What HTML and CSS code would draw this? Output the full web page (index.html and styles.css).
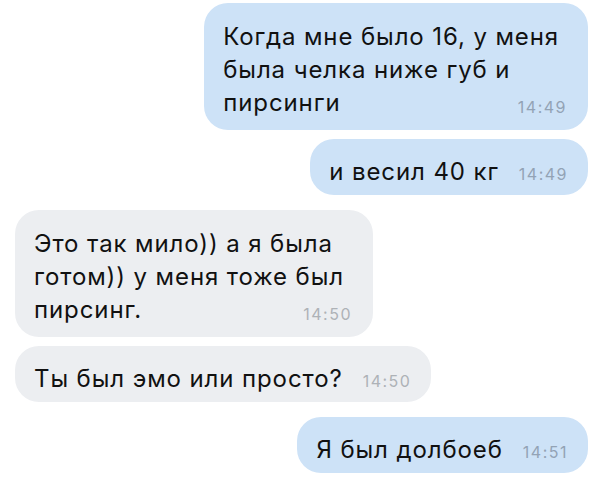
FILE: index.html
```html
<!DOCTYPE html>
<html lang="ru">
<head>
  <meta charset="UTF-8">
  <title>Переписка</title>
  <link rel="stylesheet" href="styles.css">
</head>
<body>
  <div class="chat">
    <div class="msg out multi">
      <div class="text">Когда мне было 16, у меня<br>была челка ниже губ и<br>пирсинги</div>
      <span class="time">14:49</span>
    </div>
    <div class="msg out">
      <div class="text">и весил 40 кг</div>
      <span class="time">14:49</span>
    </div>

    <div class="msg in multi first">
      <div class="text">Это так мило)) а я была<br>готом)) у меня тоже был<br>пирсинг.</div>
      <span class="time">14:50</span>
    </div>
    <div class="msg in">
      <div class="text">Ты был эмо или просто?</div>
      <span class="time">14:50</span>
    </div>

    <div class="msg out first">
      <div class="text">Я был долбоеб</div>
      <span class="time">14:51</span>
    </div>
  </div>
</body>
</html>
```

FILE: styles.css
```css
body {
  margin: 0;
  background: #ffffff;
  font-family: Inter, "Liberation Sans", sans-serif;
  color: #111111;
}
.chat {
  display: flex;
  flex-direction: column;
  padding: 3px 12px 0 15px;
}
.msg {
  display: flex;
  align-items: baseline;
  gap: 20px;
  padding: 16px 20px 7px 19px;
  border-radius: 24px;
  font-size: 24px;
  line-height: 33px;
  letter-spacing: 0.9px;
  margin-top: 9px;
}
.msg:first-child {
  margin-top: 0;
}
.msg.first {
  margin-top: 15px;
}
.out {
  align-self: flex-end;
  background: #cde2f7;
}
.in {
  align-self: flex-start;
  background: #eceef1;
}
.time {
  font-size: 16px;
  line-height: 20px;
  letter-spacing: 1.5px;
  white-space: nowrap;
}
.out .time {
  color: #93a3b5;
}
.in .time {
  color: #aeb2b7;
}
.text {
  white-space: nowrap;
}

/* bubbles with several lines: time sits under the text, at the bottom right */
.multi {
  display: grid;
  padding: 17px 29px 11px 19px;
}
.multi > * {
  grid-area: 1 / 1;
}
.multi .time {
  justify-self: end;
  align-self: end;
  margin-right: -8px;
  margin-bottom: 2px;
}
```
